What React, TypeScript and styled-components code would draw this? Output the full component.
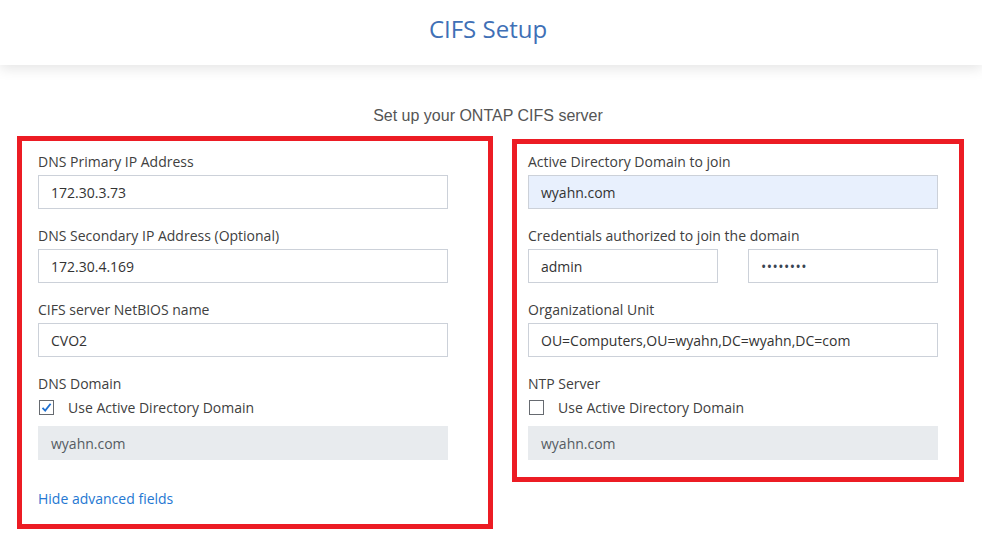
import styled, { createGlobalStyle } from "styled-components";

const GlobalStyle = createGlobalStyle`
    body {
        margin: 0;
        background: #ffffff;
        font-family: "Open Sans", "Noto Sans", sans-serif;
    }
`;

const Page = styled.div`
    width: 100%;
`;

const Header = styled.header`
    height: 65px;
    padding-right: 6px;
    display: flex;
    align-items: center;
    justify-content: center;
    background: #ffffff;
    box-shadow: 0 4px 12px rgb(0 0 0 / 10%);
    position: relative;
`;

const Title = styled.h1`
    margin: 0 0 8px;
    font-size: 24px;
    font-weight: 400;
    color: #3f70b6;
`;

const Subtitle = styled.p`
    margin: 41px 6px 10px 0;
    text-align: center;
    font-family: "Liberation Sans", Arial, sans-serif;
    font-size: 16px;
    color: #555555;
    line-height: 20px;
`;

const Columns = styled.div`
    display: flex;
    align-items: flex-start;
    gap: 19px;
    padding-left: 17px;
`;

const Panel = styled.section<{ $width: number; $top: number; $pad: string }>`
    width: ${({ $width }) => $width}px;
    box-sizing: border-box;
    margin-top: ${({ $top }) => $top}px;
    border: 5px solid #ec1c24;
    padding: ${({ $pad }) => $pad};
    display: flex;
    flex-direction: column;
`;

const Field = styled.div`
    display: flex;
    flex-direction: column;
    margin-bottom: 17px;
    &:last-of-type {
        margin-bottom: 0;
    }
`;

const Label = styled.label`
    font-size: 14px;
    line-height: 20px;
    color: #404040;
    margin-bottom: 3px;
`;

const Input = styled.div<{ $tone?: "plain" | "filled" | "disabled"; $width?: number }>`
    box-sizing: border-box;
    height: 34px;
    width: ${({ $width }) => ($width ? `${$width}px` : "410px")};
    padding: 0 12px;
    display: flex;
    align-items: center;
    font-size: 14px;
    color: ${({ $tone }) => ($tone === "disabled" ? "#555b62" : "#333333")};
    border: 1px solid ${({ $tone }) => ($tone === "disabled" ? "#e8ebee" : "#ccd1d9")};
    background: ${({ $tone }) =>
        $tone === "filled" ? "#e8f0fd" : $tone === "disabled" ? "#e8ebee" : "#ffffff"};
`;

const Dots = styled.span`
    font-size: 14px;
    letter-spacing: 0.5px;
    color: #3a4552;
`;

const InputPair = styled.div`
    display: flex;
    gap: 30px;
`;

const CheckRow = styled.div`
    display: flex;
    align-items: center;
    gap: 14px;
    height: 20px;
    margin: 0 0 9px 1px;
    font-size: 14px;
    color: #404040;
`;

const Box = styled.span`
    box-sizing: border-box;
    width: 15px;
    height: 15px;
    border: 1px solid #666a70;
    background: #ffffff;
    display: flex;
    align-items: center;
    justify-content: center;
`;

const HideLink = styled.a`
    margin-top: 29px;
    font-size: 14px;
    line-height: 20px;
    color: #2577d2;
    text-decoration: none;
`;

function Check({ checked }: { checked: boolean }) {
    return (
        <Box>
            {checked && (
                <svg width="11" height="11" viewBox="0 0 11 11">
                    <path d="M1.5 5.8 L4.2 8.6 L9.6 1.8" fill="none" stroke="#1e6fd0" strokeWidth="1.8" />
                </svg>
            )}
        </Box>
    );
}

function App() {
    return (
        <Page>
            <GlobalStyle />
            <Header>
                <Title>CIFS Setup</Title>
            </Header>
            <Subtitle>Set up your ONTAP CIFS server</Subtitle>
            <Columns>
                <Panel $width={476} $top={0} $pad="11px 0 15px 16px">
                    <Field>
                        <Label>DNS Primary IP Address</Label>
                        <Input>172.30.3.73</Input>
                    </Field>
                    <Field>
                        <Label>DNS Secondary IP Address (Optional)</Label>
                        <Input>172.30.4.169</Input>
                    </Field>
                    <Field>
                        <Label>CIFS server NetBIOS name</Label>
                        <Input>CVO2</Input>
                    </Field>
                    <Field>
                        <Label>DNS Domain</Label>
                        <CheckRow>
                            <Check checked />
                            Use Active Directory Domain
                        </CheckRow>
                        <Input $tone="disabled">wyahn.com</Input>
                    </Field>
                    <HideLink href="#">Hide advanced fields</HideLink>
                </Panel>
                <Panel $width={452} $top={3} $pad="8px 0 17px 11px">
                    <Field>
                        <Label>Active Directory Domain to join</Label>
                        <Input $tone="filled">wyahn.com</Input>
                    </Field>
                    <Field>
                        <Label>Credentials authorized to join the domain</Label>
                        <InputPair>
                            <Input $width={190}>admin</Input>
                            <Input $width={190}>
                                <Dots>••••••••</Dots>
                            </Input>
                        </InputPair>
                    </Field>
                    <Field>
                        <Label>Organizational Unit</Label>
                        <Input>OU=Computers,OU=wyahn,DC=wyahn,DC=com</Input>
                    </Field>
                    <Field>
                        <Label>NTP Server</Label>
                        <CheckRow>
                            <Check checked={false} />
                            Use Active Directory Domain
                        </CheckRow>
                        <Input $tone="disabled">wyahn.com</Input>
                    </Field>
                </Panel>
            </Columns>
        </Page>
    );
}

export default App;
